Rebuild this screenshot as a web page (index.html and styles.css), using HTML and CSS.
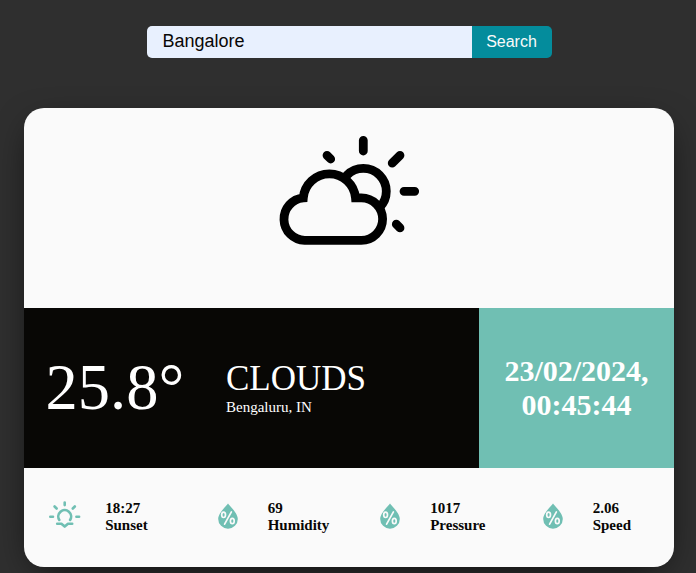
FILE: index.html
```html
<!DOCTYPE html>
<html lang="en">
<head>
<meta charset="utf-8">
<title>Weather</title>
<link rel="stylesheet" href="styles.css">
</head>
<body>
<svg class="defs" aria-hidden="true">
  <symbol id="drop" viewBox="0 0 20 26">
    <path fill="currentColor" d="M10 .5C12 3.300 19.800 10.300 19.800 15.900A9.800 9.800 0 0 1 .2 15.900C.2 10.300 8 3.300 10 .5Z"/>
    <g fill="none" stroke="#fafafa" stroke-width="1.700" stroke-linecap="round">
      <ellipse cx="5.600" cy="11.800" rx="1.900" ry="2.700"/>
      <ellipse cx="14.300" cy="18" rx="1.900" ry="2.700"/>
      <path d="M13.400 8.900 6.600 21.200"/>
    </g>
  </symbol>
</svg>
<form class="search">
  <input class="search-input" type="text" value="Bangalore" aria-label="City" spellcheck="false">
  <button class="search-button" type="button">Search</button>
</form>
<main class="card">
  <div class="hero">
    <svg class="hero-icon" viewBox="265 125 170 130">
      <g fill="#fafafa" stroke="#000" stroke-width="8.800" stroke-linecap="round">
        <circle cx="363.300" cy="191.300" r="23"/>
        <path stroke-linecap="butt" d="M303.300 197.900A21.300 21.300 0 0 0 304.700 240.400H361.300A21.300 21.300 0 0 0 361.300 197.800H355.500A26.200 26.200 0 0 0 303.300 197.900Z"/>
        <path d="M363.300 140.300V151M404 191.300H414.700M392.200 163.100 400 155.300M327 155.300 330.700 159M396.300 224.200 400 227.900"/>
      </g>
    </svg>
  </div>
  <div class="summary">
    <div class="now">
      <div class="temperature">25.8°</div>
      <div>
        <div class="condition">CLOUDS</div>
        <div class="place">Bengaluru, IN</div>
      </div>
    </div>
    <div class="date">23/02/2024, 00:45:44</div>
  </div>
  <div class="details">
    <div class="detail">
      <svg class="sunset" viewBox="48 500 34 30" fill="none" stroke="currentColor" stroke-width="2.600" stroke-linecap="round" stroke-linejoin="round">
        <path d="M59.300 520A6.400 6.400 0 1 1 70.100 520M64.700 502.500V505.100M50.300 516.800H53M76.400 516.800H79.100M54.600 506.500 56.600 508.500M74.800 506.500 72.800 508.500M57.200 523.700H61.400L64.700 526.600 68 523.700H72.200"/>
      </svg>
      <div>18:27<br>Sunset</div>
    </div>
    <div class="detail">
      <svg class="drop"><use href="#drop"/></svg>
      <div>69<br>Humidity</div>
    </div>
    <div class="detail">
      <svg class="drop"><use href="#drop"/></svg>
      <div>1017<br>Pressure</div>
    </div>
    <div class="detail">
      <svg class="drop"><use href="#drop"/></svg>
      <div>2.06<br>Speed</div>
    </div>
  </div>
</main>
</body>
</html>
```

FILE: styles.css
```css
* { box-sizing: border-box; }
html, body { height: 100%; overflow: hidden; }
body {
  margin: 0;
  padding: 26px 22px 0 24px;
  background: #2f2f2f;
  font-family: "Liberation Serif", serif;
  color: #080705;
}
.defs { display: none; }
.search {
  display: flex;
  width: 405px;
  height: 32px;
  margin: 0 0 50px 123px;
  font-family: "Liberation Sans", sans-serif;
}
.search-input {
  width: 325px;
  padding: 0 15.500px 2px;
  border: 0;
  border-radius: 5px 0 0 5px;
  background: #e8f0fe;
  color: #080705;
  font: 18px "Liberation Sans", sans-serif;
}
.search-button {
  width: 80px;
  padding: 0 1px 0 0;
  border: 0;
  border-radius: 0 5px 5px 0;
  background: #048c9c;
  color: #fafafa;
  font: 16px "Liberation Sans", sans-serif;
}
.card {
  width: 650px;
  height: 459px;
  overflow: hidden;
  border-radius: 20px;
  background: #fafafa;
  box-shadow: 0 10px 38px -14px #000;
}
.hero { height: 200px; padding-top: 17px; }
.hero-icon { display: block; width: 170px; height: 130px; margin-left: 241px; }
.summary { display: flex; height: 160px; color: #fff; }
.now {
  display: flex;
  align-items: center;
  width: 455px;
  padding: 0 0 2px 21.500px;
  background: #080705;
}
.temperature { width: 180.500px; padding-top: 2px; font-size: 64.500px; line-height: 74px; }
.condition { font-size: 35px; line-height: 40px; }
.place { font-size: 15px; line-height: 17px; }
.date {
  display: flex;
  align-items: center;
  width: 195px;
  padding: 0 20px;
  background: #70bfb3;
  font-size: 30px;
  font-weight: bold;
  line-height: 34px;
  text-align: center;
}
.details {
  display: grid;
  grid-template-columns: repeat(4, 162.500px);
  height: 99px;
  padding-top: 32px;
}
.detail {
  display: grid;
  grid-template-columns: 81.200px 81px;
  align-items: start;
  font-size: 15px;
  font-weight: bold;
  line-height: 17px;
}
.sunset { width: 34px; height: 30px; margin-left: 24px; color: #70bfb3; }
.drop { width: 20px; height: 26px; margin: 3px 0 0 31px; color: #70bfb3; }
```
